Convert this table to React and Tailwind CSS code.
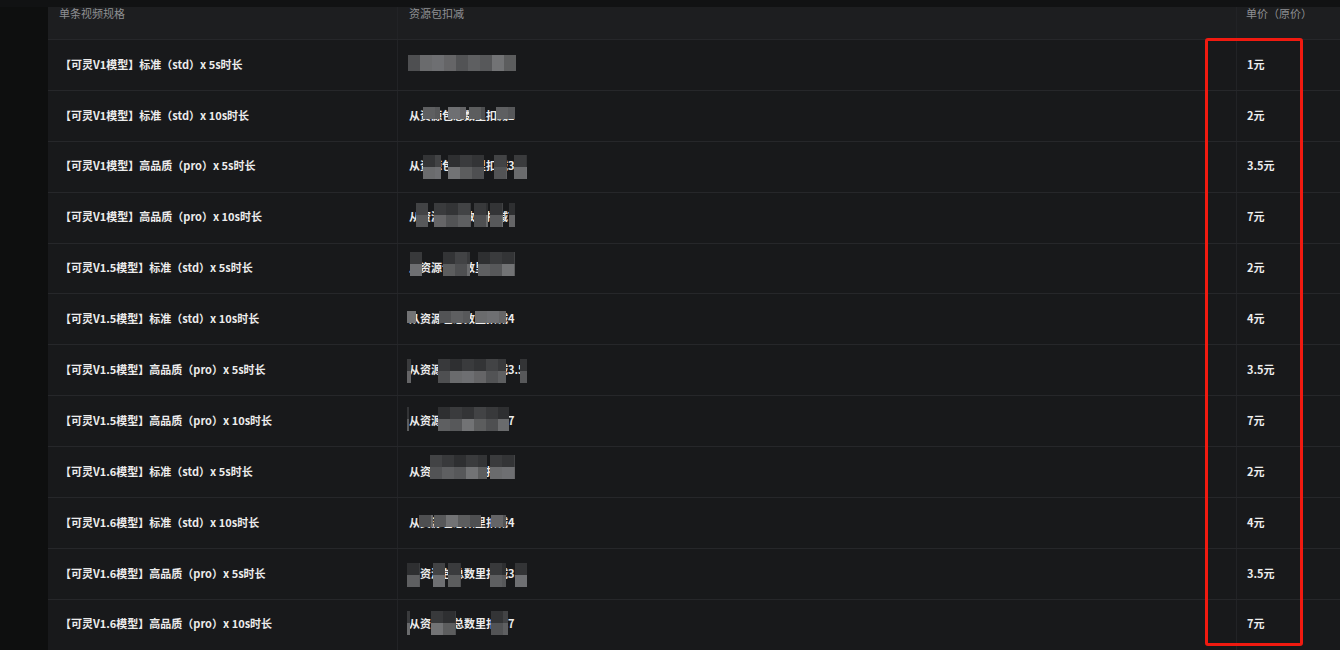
import React from "react";

const rows = [
  { spec: "【可灵V1模型】标准（std）x 5s时长", price: "1" },
  { spec: "【可灵V1模型】标准（std）x 10s时长", price: "2" },
  { spec: "【可灵V1模型】高品质（pro）x 5s时长", price: "3.5" },
  { spec: "【可灵V1模型】高品质（pro）x 10s时长", price: "7" },
  { spec: "【可灵V1.5模型】标准（std）x 5s时长", price: "2" },
  { spec: "【可灵V1.5模型】标准（std）x 10s时长", price: "4" },
  { spec: "【可灵V1.5模型】高品质（pro）x 5s时长", price: "3.5" },
  { spec: "【可灵V1.5模型】高品质（pro）x 10s时长", price: "7" },
  { spec: "【可灵V1.6模型】标准（std）x 5s时长", price: "2" },
  { spec: "【可灵V1.6模型】标准（std）x 10s时长", price: "4" },
  { spec: "【可灵V1.6模型】高品质（pro）x 5s时长", price: "3.5" },
  { spec: "【可灵V1.6模型】高品质（pro）x 10s时长", price: "7" },
];

// mosaic redactions: [left in cell, top in row, width, height]
const masks = [
  [[-1, 16, 108, 16]],
  [[14, 17, 17, 12], [39, 17, 18, 12], [60, 17, 16, 12], [87, 17, 19, 12]],
  [[14, 14, 18, 24], [39, 14, 36, 24], [85, 14, 13, 24], [105, 14, 13, 24]],
  [[7, 11, 12, 24], [25, 11, 37, 24], [65, 11, 14, 24], [81, 11, 13, 24], [100, 11, 6, 24]],
  [[1, 9, 12, 24], [34, 9, 27, 24], [69, 9, 37, 24]],
  [[-2, 18, 9, 12], [30, 18, 31, 12], [66, 18, 31, 12]],
  [[-2, 15, 4, 24], [29, 15, 68, 24], [111, 15, 7, 24]],
  [[-2, 12, 2, 24], [29, 12, 71, 24]],
  [[21, 9, 57, 24], [81, 9, 25, 24]],
  [[10, 18, 14, 12], [25, 18, 47, 12], [82, 18, 15, 12]],
  [[-2, 15, 13, 24], [24, 15, 12, 24], [39, 15, 13, 24], [81, 15, 16, 24], [106, 15, 12, 24]],
  [[-2, 12, 3, 24], [22, 12, 25, 24], [82, 12, 17, 24]],
];

const tones = ["#4e4f51", "#5e5f61", "#6a6b6d", "#57585a", "#6e6f72", "#727375", "#656567", "#5c5d5e", "#525355"];
const darkTones = ["#2e2f31", "#3a3b3d", "#333436", "#424345", "#38393b"];

const Mask = ({ left, top, width, height, seed }) => {
  const cells = Math.max(1, Math.ceil(width / 12));
  const two = height > 16;
  return (
    <div
      className="absolute flex flex-col overflow-hidden"
      style={{ left, top, width, height }}
    >
      {two && (
        <div className="flex flex-1">
          {Array.from({ length: cells }).map((_, i) => (
            <div
              key={i}
              className="h-full w-[12px] shrink-0"
              style={{ background: darkTones[(i + seed) % darkTones.length] }}
            />
          ))}
        </div>
      )}
      <div className="flex flex-1">
        {Array.from({ length: cells }).map((_, i) => (
          <div
            key={i}
            className="h-full w-[12px] shrink-0"
            style={{ background: tones[(i * 2 + seed) % tones.length] }}
          />
        ))}
      </div>
    </div>
  );
};

const Row = ({ row, i }) => (
  <div className="grid h-[50.9px] grid-cols-[350px_839px_103px] border-b border-[#26272a] text-[11px] font-bold text-[#ececec]">
    <div className="flex items-center border-r border-[#222326] pb-[2px] pl-[12px]">{row.spec}</div>
    <div className="relative flex items-center border-r border-[#222326] pb-[2px] pl-[11px]">
      <span>从资源包总数里扣减{row.price}</span>
      {masks[i].map(([l, t, w, h], k) => (
        <Mask key={k} left={11 + l} top={t - 1} width={w} height={h} seed={i + k * 3} />
      ))}
    </div>
    <div className="flex items-center pb-[2px] pl-[10px]">{row.price}元</div>
  </div>
);

export default function App() {
  return (
    <div
      className="flex h-[650px] w-[1340px] flex-col overflow-hidden bg-[#0e0f0f]"
      style={{ fontFamily: '"Noto Sans CJK SC", "Noto Sans", sans-serif' }}
    >
      <div className="h-[7px] shrink-0 bg-[#111213]" />
      <div className="flex flex-1">
        <div className="w-[48px] shrink-0" />
        <div className="relative flex-1 bg-[#18191b]">
          <div className="grid h-[33px] grid-cols-[350px_839px_103px] border-b border-[#26272a] bg-[#1d1e20] text-[11px] leading-[12px] text-[#8e8f92]">
            <div className="border-r border-[#222326] pl-[11px]">单条视频规格</div>
            <div className="border-r border-[#222326] pl-[11px]">资源包扣减</div>
            <div className="pl-[9px]">单价（原价）</div>
          </div>
          {rows.map((row, i) => (
            <Row key={i} row={row} i={i} />
          ))}
          <div className="absolute left-[1157px] top-[31px] h-[608px] w-[98px] rounded-[3px] border-[3px] border-[#f01a10]" />
        </div>
      </div>
    </div>
  );
}
